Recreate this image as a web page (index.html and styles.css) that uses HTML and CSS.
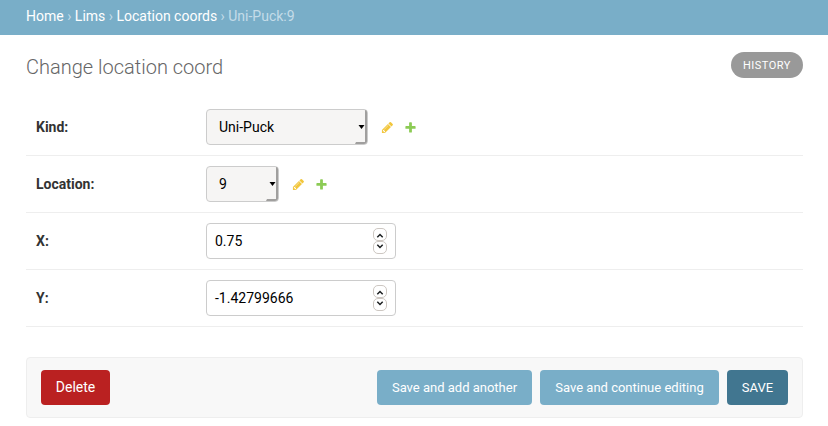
FILE: index.html
```html
<!DOCTYPE html>
<html lang="en">
<head>
<meta charset="utf-8">
<title>Change location coord</title>
<link rel="stylesheet" href="styles.css">
</head>
<body>
<svg width="0" height="0" class="sprite">
  <symbol id="pencil" viewBox="0 0 1792 1792"><path d="M491 1536l91-91-235-235-91 91v107h128v128h107zm523-928q0-22-22-22-10 0-17 7l-542 542q-7 7-7 17 0 22 22 22 10 0 17-7l542-542q7-7 7-17zm-54-192l416 416-832 832h-416v-416zm683 96q0 53-37 90l-166 166-416-416 166-165q36-38 90-38 53 0 91 38l235 234q37 39 37 91z"/></symbol>
  <symbol id="plus" viewBox="0 0 1792 1792"><path d="M1600 796v192q0 40-28 68t-68 28h-416v416q0 40-28 68t-68 28h-192q-40 0-68-28t-28-68v-416h-416q-40 0-68-28t-28-68v-192q0-40 28-68t68-28h416v-416q0-40 28-68t68-28h192q40 0 68 28t28 68v416h416q40 0 68 28t28 68z"/></symbol>
  <symbol id="up" viewBox="0 0 8 5"><path d="M1.3 4.2 4 1.5 6.7 4.2"/></symbol>
  <symbol id="down" viewBox="0 0 8 5"><path d="M1.3 .8 4 3.5 6.7 .8"/></symbol>
</svg>
<nav class="breadcrumbs"><a>Home</a> › <a>Lims</a> › <a>Location coords</a> › Uni-Puck:9</nav>
<main class="content">
  <header class="heading">
    <h1>Change location coord</h1>
    <a class="history">HISTORY</a>
  </header>
  <div class="row">
    <label>Kind:</label>
    <div class="select kind">Uni-Puck</div>
    <svg class="icon edit"><use href="#pencil"/></svg>
    <svg class="icon add"><use href="#plus"/></svg>
  </div>
  <div class="row">
    <label>Location:</label>
    <div class="select location">9</div>
    <svg class="icon edit"><use href="#pencil"/></svg>
    <svg class="icon add"><use href="#plus"/></svg>
  </div>
  <div class="row">
    <label>X:</label>
    <div class="number">0.75
      <div class="spinner"><span><svg><use href="#up"/></svg></span><span><svg><use href="#down"/></svg></span></div>
    </div>
  </div>
  <div class="row">
    <label>Y:</label>
    <div class="number">-1.42799666
      <div class="spinner"><span><svg><use href="#up"/></svg></span><span><svg><use href="#down"/></svg></span></div>
    </div>
  </div>
  <footer class="submit">
    <a class="button delete">Delete</a>
    <a class="button another">Save and add another</a>
    <a class="button continue">Save and continue editing</a>
    <a class="button save">SAVE</a>
  </footer>
</main>
</body>
</html>
```
FILE: styles.css
```css
* { box-sizing: border-box; }
body {
  margin: 0;
  background: #fff;
  color: #333;
  font-family: Roboto, "Liberation Sans", sans-serif;
  font-size: 14px;
}
.sprite { display: block; height: 0; }
.breadcrumbs {
  height: 35px;
  padding: 0 26px;
  line-height: 32px;
  background: #79aec8;
  color: #c4dce8;
  white-space: nowrap;
}
.breadcrumbs a { color: #fff; }
.content { padding: 17px 25px 0 26px; }
.heading {
  display: flex;
  justify-content: space-between;
  align-items: flex-start;
  height: 47px;
}
h1 {
  margin: 0;
  font-size: 20px;
  font-weight: 300;
  line-height: 30px;
  color: #666;
}
.history {
  width: 72px;
  height: 26px;
  border-radius: 13px;
  background: #999;
  color: #fff;
  font-size: 11px;
  line-height: 27px;
  letter-spacing: .5px;
  text-align: center;
}
.row {
  display: flex;
  align-items: center;
  height: 57px;
  padding-left: 10px;
  border-bottom: 1px solid #eee;
}
label { width: 170px; font-weight: 700; }
.select, .number {
  position: relative;
  height: 36px;
  border: 1px solid #ccc;
  border-radius: 4px;
  color: #000;
  line-height: 34px;
}
.select {
  padding-left: 12px;
  background: #f6f5f4;
}
.select::before {
  content: "";
  position: absolute;
  right: 0;
  bottom: 0;
  width: 10px;
  height: 32px;
  border-right: 2px solid #a09f9e;
  border-bottom: 2px solid #a09f9e;
  border-radius: 0 2px 3px 0;
  clip-path: polygon(8px 0, 100% 0, 100% 100%, 0 100%, 2px 30px, 8px 30px);
}
.select::after {
  content: "";
  position: absolute;
  right: 2px;
  top: 15px;
  border: 3.5px solid transparent;
  border-top: 4px solid #000;
  border-bottom: 0;
  transform: translateX(-.5px);
}
.kind { width: 162px; }
.location { width: 73px; }
.icon { width: 13px; height: 13px; opacity: .8; }
.edit { margin-left: 13px; fill: #efb80b; }
.add { margin-left: 10px; fill: #70bf2b; }
.number {
  display: flex;
  justify-content: space-between;
  width: 190px;
  padding: 0 8px;
}
.spinner { width: 14px; padding-top: 4px; }
.spinner span {
  display: flex;
  align-items: center;
  justify-content: center;
  height: 13px;
  border: 1px solid #cdc7c2;
  border-radius: 5px;
}
.spinner span + span { padding-bottom: 2px; }
.spinner span:first-child { padding-top: 1px; }
.spinner svg {
  width: 8px;
  height: 5px;
  fill: none;
  stroke: #1b1f20;
  stroke-width: 1.5;
}
.submit {
  display: flex;
  gap: 8px;
  height: 61px;
  margin-top: 30px;
  padding: 12px 14px;
  border: 1px solid #eee;
  border-radius: 4px;
  background: #f8f8f8;
}
.button {
  height: 35px;
  border-radius: 4px;
  background: #79aec8;
  color: #fff;
  font-size: 13px;
  line-height: 35px;
  text-align: center;
  white-space: nowrap;
}
.delete {
  width: 69px;
  margin-right: auto;
  background: #ba2121;
  font-size: 14px;
}
.another { width: 155px; }
.continue { width: 179px; }
.save { width: 61px; background: #417690; }
```
